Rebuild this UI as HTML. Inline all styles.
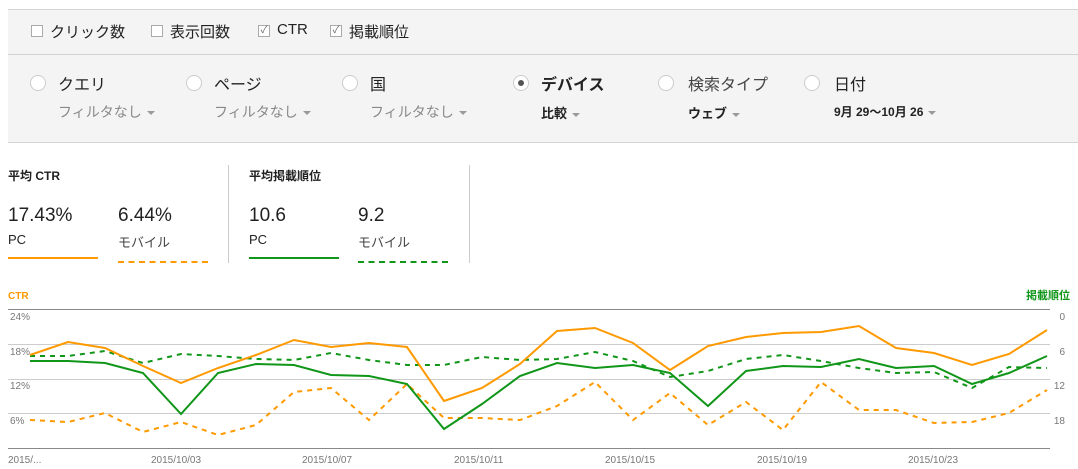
<!DOCTYPE html>
<html><head><meta charset="utf-8"><style>
body{margin:0;width:1078px;height:469px;background:#fff;font-family:"Liberation Sans","Noto Sans CJK JP",sans-serif;position:relative;overflow:hidden;color:#222}
.a{position:absolute;white-space:nowrap}
.cb{position:absolute;width:10px;height:10px;border:1px solid #aaa;background:#fff}
.rd{position:absolute;width:14px;height:14px;border:1px solid #ccc;border-radius:50%;background:#fff}
.sub{font-size:14px;color:#888}
.tri{display:inline-block;width:0;height:0;border-left:4px solid transparent;border-right:4px solid transparent;border-top:4px solid #999;vertical-align:middle;margin-left:5px}
</style></head><body>
<div class="a" style="left:8px;top:9px;width:1070px;height:132px;background:#f4f4f4;border-top:1px solid #d4d4d4;border-bottom:1px solid #d4d4d4"></div>
<div class="a" style="left:8px;top:54px;width:1070px;height:1px;background:#d4d4d4"></div>
<div class="cb" style="left:31px;top:25px"></div><div class="a" style="left:50px;top:21px;font-size:15px">クリック数</div>
<div class="cb" style="left:151px;top:25px"></div><div class="a" style="left:170px;top:21px;font-size:15px">表示回数</div>
<div class="cb" style="left:258px;top:25px;font-size:10px;line-height:10px;color:#666;text-align:center">✓</div><div class="a" style="left:277px;top:21px;font-size:15px">CTR</div>
<div class="cb" style="left:330px;top:25px;font-size:10px;line-height:10px;color:#666;text-align:center">✓</div><div class="a" style="left:349px;top:21px;font-size:15px">掲載順位</div>

<div class="rd" style="left:30px;top:75px"></div><div class="a" style="left:58px;top:71px;font-size:16px">クエリ</div><div class="a sub" style="left:58px;top:102px">フィルタなし<span class="tri"></span></div>
<div class="rd" style="left:186px;top:75px"></div><div class="a" style="left:214px;top:71px;font-size:16px">ページ</div><div class="a sub" style="left:214px;top:102px">フィルタなし<span class="tri"></span></div>
<div class="rd" style="left:342px;top:75px"></div><div class="a" style="left:370px;top:71px;font-size:16px">国</div><div class="a sub" style="left:370px;top:102px">フィルタなし<span class="tri"></span></div>
<div class="rd" style="left:513px;top:75px"><div style="position:absolute;left:4px;top:4px;width:6px;height:6px;border-radius:50%;background:#555"></div></div><div class="a" style="left:541px;top:71px;font-size:16px;font-weight:bold">デバイス</div><div class="a" style="left:541px;top:103px;font-size:13px;font-weight:bold">比較<span class="tri"></span></div>
<div class="rd" style="left:658px;top:75px"></div><div class="a" style="left:688px;top:71px;font-size:16px;color:#444">検索タイプ</div><div class="a" style="left:688px;top:103px;font-size:13px;font-weight:bold">ウェブ<span class="tri"></span></div>
<div class="rd" style="left:804px;top:75px"></div><div class="a" style="left:834px;top:71px;font-size:16px">日付</div><div class="a" style="left:834px;top:103px;font-size:12px;font-weight:bold">9月 29〜10月 26<span class="tri"></span></div>

<div class="a" style="left:8px;top:167px;font-size:12px;font-weight:bold">平均 CTR</div>
<div class="a" style="left:8px;top:205px;font-size:19px">17.43%</div><div class="a" style="left:8px;top:232px;font-size:13px">PC</div>
<div class="a" style="left:118px;top:205px;font-size:19px">6.44%</div><div class="a" style="left:118px;top:232px;font-size:13px;color:#444">モバイル</div>
<div class="a" style="left:8px;top:257px;width:90px;height:2px;background:#f90"></div>
<div class="a" style="left:118px;top:261px;width:90px;border-top:2px dashed #f90"></div>
<div class="a" style="left:228px;top:165px;width:1px;height:98px;background:#ccc"></div>
<div class="a" style="left:249px;top:167px;font-size:12px;font-weight:bold">平均掲載順位</div>
<div class="a" style="left:249px;top:205px;font-size:19px">10.6</div><div class="a" style="left:249px;top:232px;font-size:13px">PC</div>
<div class="a" style="left:358px;top:205px;font-size:19px">9.2</div><div class="a" style="left:358px;top:232px;font-size:13px;color:#444">モバイル</div>
<div class="a" style="left:249px;top:257px;width:90px;height:2px;background:#109618"></div>
<div class="a" style="left:358px;top:261px;width:90px;border-top:2px dashed #109618"></div>
<div class="a" style="left:469px;top:165px;width:1px;height:98px;background:#ccc"></div>

<svg class="a" style="left:0;top:0" width="1078" height="469" font-family="Liberation Sans, sans-serif">
<text x="8" y="299" font-size="10" font-weight="bold" fill="#f90">CTR</text>
<text x="1070" y="299" font-size="11" font-weight="bold" fill="#109618" text-anchor="end" font-family="Liberation Sans, Noto Sans CJK JP, sans-serif">掲載順位</text>
<line x1="8" y1="309.5" x2="1050" y2="309.5" stroke="#888"/>
<line x1="8" y1="344.5" x2="1050" y2="344.5" stroke="#ccc"/>
<line x1="8" y1="379.5" x2="1050" y2="379.5" stroke="#ccc"/>
<line x1="8" y1="413.5" x2="1050" y2="413.5" stroke="#ccc"/>
<line x1="8" y1="448.5" x2="1050" y2="448.5" stroke="#888"/>
<g font-size="10" fill="#777">
<text x="10" y="320">24%</text><text x="10" y="355">18%</text><text x="10" y="389">12%</text><text x="10" y="424">6%</text>
<text x="1065" y="320" text-anchor="end">0</text><text x="1065" y="355" text-anchor="end">6</text><text x="1065" y="389" text-anchor="end">12</text><text x="1065" y="424" text-anchor="end">18</text>
<text x="8" y="463">2015/...</text><text x="151" y="463">2015/10/03</text><text x="302" y="463">2015/10/07</text><text x="454" y="463">2015/10/11</text><text x="605" y="463">2015/10/15</text><text x="757" y="463">2015/10/19</text><text x="908" y="463">2015/10/23</text>
</g>
<g fill="none" stroke-width="2">
<polyline stroke="#f90" stroke-dasharray="5,5" points="30,420 68,422 105,413 143,432 181,422 218,435 256,425 294,392 331,388 369,420 407,384 444,418 482,418 520,420 557,406 595,382 633,420 670,393 708,425 746,402 783,430 821,382 859,410 896,410 934,423 972,422 1009,413 1047,390"/>
<polyline stroke="#109618" stroke-dasharray="5,5" points="30,356 68,356 105,351 143,363 181,354 218,356 256,359 294,360 331,353 369,360 407,365 444,365 482,357 520,360 557,359 595,352 633,361 670,377 708,371 746,359 783,355 821,361 859,368 896,373 934,372 972,388 1009,367 1047,368"/>
<polyline stroke="#f90" points="30,355 68,342 105,348 143,366 181,383 218,368 256,355 294,340 331,347 369,343 407,347 444,401 482,388 520,364 557,331 595,328 633,343 670,370 708,346 746,337 783,333 821,332 859,326 896,348 934,353 972,365 1009,354 1047,330"/>
<polyline stroke="#109618" points="30,361 68,361 105,363 143,373 181,414 218,373 256,364 294,365 331,375 369,376 407,384 444,429 482,404 520,376 557,363 595,368 633,365 670,373 708,406 746,371 783,366 821,367 859,359 896,368 934,366 972,384 1009,373 1047,356"/>
</g>
</svg>
</body></html>
